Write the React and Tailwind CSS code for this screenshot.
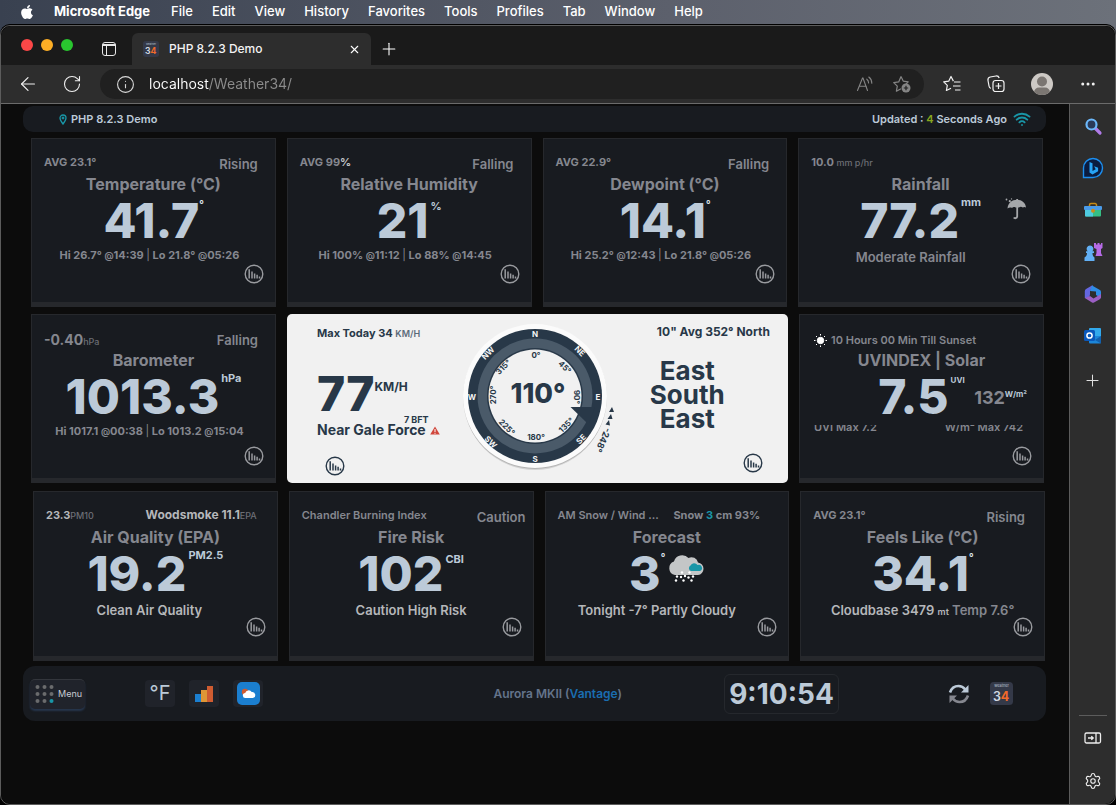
import { ArrowLeft, RotateCw, Info, X, Plus, Ellipsis, Wifi, Settings } from 'lucide-react';
import { FaApple } from 'react-icons/fa';

const menuItems = ['File', 'Edit', 'View', 'History', 'Favorites', 'Tools', 'Profiles', 'Tab', 'Window', 'Help'];

const Logo34 = ({ size }) => (
    <svg width={size} height={size} viewBox="0 0 24 24" className="shrink-0" fontFamily="Inter, sans-serif">
        <rect width="24" height="24" rx="4" fill="#343948" />
        <text x="12" y="5.5" fontSize="4" fill="#b8c2d0" textAnchor="middle">weather</text>
        <text x="3" y="20" fontSize="13" fontWeight="600" fill="#d5dbe4">3<tspan fill="#f26a2a" fontWeight="700">4</tspan></text>
    </svg>
);

const ChartButton = ({ className = 'text-[#999b9f]', label }) => (
    <button aria-label={`${label} chart`} className={`block w-5 h-5 ${className}`}>
        <svg width="20" height="20" viewBox="0 0 20 20" fill="none" stroke="currentColor">
            <circle cx="10" cy="10" r="8.8" strokeWidth="1.4" />
            <path d="M5.2 14.6V5.2M8 14.6V7.4M10.6 14.6V9.6M13.1 14.6V10.8M15.5 14.6V12.4" strokeWidth="1.5" />
        </svg>
    </button>
);

/* Browser chrome */

const MenuBar = () => (
    <nav className="flex items-center h-6 pl-[19px] gap-[19px] text-[13px] font-medium text-white whitespace-nowrap">
        <FaApple size={16} className="text-white" />
        <span className="pr-0.5 font-bold">Microsoft Edge</span>
        {menuItems.map((item) => (
            <span key={item}>{item}</span>
        ))}
    </nav>
);

const TabStrip = () => (
    <div className="flex items-end h-[39px] bg-[#1a1a1a] rounded-t-[10px]">
        <div className="flex items-center gap-2 h-10 pl-5">
            <span className="w-3 h-3 rounded-full bg-[#fc4747]" />
            <span className="w-3 h-3 rounded-full bg-[#fdae25]" />
            <span className="w-3 h-3 rounded-full bg-[#29c62f]" />
        </div>
        <button aria-label="Tab actions" className="flex items-center h-8 ml-7">
            <svg width="16" height="16" viewBox="0 0 16 16" fill="none" stroke="#e8e8e8">
                <rect x="1.5" y="1.5" width="13" height="13" rx="2.5" />
                <path d="M1.5 3.5h13M1.5 4.5h13M5.5 5v9.500" />
            </svg>
        </button>
        <div className="flex items-center w-[239px] h-8 ml-[15px] pl-[11px] pr-2.5 bg-[#2d2d2d] rounded-t-md">
            <Logo34 size={16} />
            <span className="flex-1 ml-2.5 text-xs font-medium text-[#f3f3f3]">PHP 8.2.3 Demo</span>
            <button aria-label="Close tab"><X size={13} strokeWidth={2} className="text-white" /></button>
        </div>
        <button aria-label="New tab" className="flex items-center h-8 ml-2 text-white"><Plus size={20} strokeWidth={1.3} /></button>
    </div>
);

const Toolbar = () => (
    <div className="flex items-center h-[38px] bg-[#2d2d2d] text-[#f0f0f0]">
        <button aria-label="Back" className="ml-4"><ArrowLeft size={22} strokeWidth={1.3} /></button>
        <button aria-label="Reload" className="ml-[23px]"><RotateCw size={20} strokeWidth={1.3} /></button>
        <div className="flex flex-1 items-center h-[30px] ml-[18px] pl-4 pr-3 bg-[#202020] rounded-full">
            <Info size={19} strokeWidth={1.4} className="text-[#d8d8d8]" />
            <input
                aria-label="Address"
                defaultValue="localhost/Weather34/"
                className="flex-1 min-w-0 ml-3.5 text-sm outline-none bg-[linear-gradient(90deg,#ffffff_60px,#8c8c8c_60px)] bg-clip-text text-transparent"
            />
            <button aria-label="Read aloud">
                <svg width="18" height="16" viewBox="0 0 18 16" fill="none" stroke="#858585" strokeWidth="1.1" strokeLinecap="round">
                    <path d="M1.500 14.500 6.500 2h.5l4.500 12.500M3.300 10.200h7M10.800 3.200c1.200.9 1.800 2.200 1.800 3.800M12.800 1c2 1.500 3 3.500 3 6.200" />
                </svg>
            </button>
            <button aria-label="Add to favorites" className="ml-[18px]">
                <svg width="20" height="20" viewBox="0 0 20 20" fill="none" stroke="#858585" strokeWidth="1.200" strokeLinejoin="round">
                    <path d="m9 2.500 2.200 4.600 5 .7-3 3M9 14.800l-4.600 2.400.9-5.100-3.600-3.500 5-.7L9 2.500" />
                    <circle cx="14" cy="14" r="4.500" fill="#858585" stroke="none" />
                    <path d="M14 11.800v4.400M11.800 14h4.400" stroke="#202020" />
                </svg>
            </button>
        </div>
        <button aria-label="Favorites" className="ml-[18px]">
            <svg width="20" height="20" viewBox="0 0 20 20" fill="none" stroke="#f2f2f2" strokeWidth="1.200" strokeLinejoin="round">
                <path d="M11.400 7.100 9 2.500 6.700 7.200l-5 .7 3.600 3.500-.9 5.100L9 14.200M12 8h6.500M11 12h7.500M13 16h5.500" />
            </svg>
        </button>
        <button aria-label="Collections" className="ml-6">
            <svg width="20" height="20" viewBox="0 0 20 20" fill="none" stroke="#f2f2f2" strokeWidth="1.200">
                <rect x="7" y="6.500" width="11" height="11" rx="2.500" />
                <path d="M12.500 9v6M9.500 12h6M4.800 14.400A3 3 0 0 1 3 12L2 6.500A3 3 0 0 1 4.200 3L10 2a3 3 0 0 1 3.200 2" />
            </svg>
        </button>
        <button aria-label="Profile" className="ml-[25px] rounded-full overflow-hidden">
            <svg width="22" height="22" viewBox="0 0 22 22">
                <rect width="22" height="22" fill="#cdc9c5" />
                <circle cx="11" cy="8.500" r="5" fill="#7b7672" />
                <path d="M3 22v-2.500a5 5 0 0 1 5-5h6a5 5 0 0 1 5 5V22z" fill="#7b7672" />
            </svg>
        </button>
        <button aria-label="More" className="ml-[26px] mr-[18px]"><Ellipsis size={18} strokeWidth={2} /></button>
    </div>
);

const sideApps = [
    {
        name: 'Search',
        art: (
            <>
                <path d="m11 11 5 5" stroke="#b07be8" strokeWidth="3.200" strokeLinecap="round" />
                <circle cx="7.500" cy="7.500" r="5" fill="#2a3a58" stroke="#6cb8fa" strokeWidth="2.200" />
            </>
        ),
    },
    {
        name: 'Bing',
        art: (
            <>
                <path d="M-.5 18.500V9a9.500 9.500 0 1 1 9.500 9.500z" fill="#0a1c40" stroke="#1c8ff0" strokeWidth="1.400" />
                <path d="m5.500 3 3 1.200v7.800l3.200-1.700-1.600-3.100 4 1.600v3.400L8.500 15.500l-3-2z" fill="#27a4f6" />
            </>
        ),
    },
    {
        name: 'Tools',
        art: (
            <>
                <path d="M5.500 5V4a1.500 1.500 0 0 1 1.500-1.500h4A1.500 1.500 0 0 1 12.500 4v1" fill="none" stroke="#c78a14" strokeWidth="1.500" />
                <rect x="1" y="7" width="16" height="8.500" rx="1" fill="#35bf85" />
                <path d="M1 8h8v7.500H2a1 1 0 0 1-1-1z" fill="#4fcbe0" />
                <rect x="0" y="5" width="18" height="4" rx="1" fill="#4a9be8" />
                <circle cx="9" cy="9.800" r="2" fill="#c98e1c" />
            </>
        ),
    },
    {
        name: 'Games',
        art: (
            <>
                <path d="M10 0h2v1.500h1.500V0h2v1.500H17V0h1.500v5l-1.500 1v4l1.500 3h-7l1-3V6L10 5z" fill="#b66be6" />
                <path d="M6 2.500a3.300 3.300 0 0 1 2.300 5.700H10V10H8.500c0 2 .5 3.500 2 4.500v3.500h-10v-3.500c1.800-1 2.500-2.500 2.500-4.500H2V8.200h1.700A3.300 3.300 0 0 1 6 2.500z" fill="#62b0f5" />
            </>
        ),
    },
    {
        name: 'Microsoft 365',
        art: (
            <>
                <path d="M8 .5 2 4a2.500 2.500 0 0 0-1.200 2.200V13c3 0 5.200-1 5.200-4V6l3-5.500z" fill="#6467e0" />
                <path d="m8 .5 7.500 4.300A2.500 2.500 0 0 1 17 7v6l-5-3V6.500L6 6z" fill="#2f8de6" />
                <path d="M.8 13 8 17.500a2 2 0 0 0 2 0l5.800-3.300A2.500 2.500 0 0 0 17 12V9l-7.500 4.500L6 11z" fill="#9b5fc4" />
            </>
        ),
    },
    {
        name: 'Outlook',
        art: (
            <>
                <rect x="5" y="1" width="12" height="10" rx="1" fill="#32a9ec" />
                <path d="M5 9h12v6.500a1 1 0 0 1-1 1H6a1 1 0 0 1-1-1z" fill="#1c86d9" />
                <path d="m17 9-6 4 6 3.500z" fill="#1260ad" />
                <rect x="0" y="3" width="11" height="11" rx="1.500" fill="#0a58bb" />
                <circle cx="5.500" cy="8.500" r="2.600" fill="none" stroke="#fff" strokeWidth="1.500" />
            </>
        ),
    },
];

const EdgeSidebar = () => (
    <aside className="flex flex-col items-center w-[46px] pt-px bg-[#2d2d2d] border-l border-[#5c5c5c] rounded-br-[10px]">
        {sideApps.map((app) => (
            <button key={app.name} aria-label={app.name} className="flex items-center justify-center w-full h-[42px]">
                <svg width="18" height="18" viewBox="0 0 18 18" overflow="visible">{app.art}</svg>
            </button>
        ))}
        <button aria-label="Add app" className="mt-3.5 text-[#e0e0e0]"><Plus size={19} strokeWidth={1.300} /></button>
        <div className="w-7 mt-auto border-t border-[#5c5c5c]" />
        <button aria-label="Hide sidebar" className="flex items-center justify-center w-full h-11">
            <svg width="18" height="14" viewBox="0 0 18 14" fill="none" stroke="#ededed" strokeWidth="1.300">
                <rect x="1" y="2" width="15.500" height="10" rx="1.500" />
                <path d="M12 2v10M4 7h5M7.300 5.200 9.200 7 7.300 8.800" />
            </svg>
        </button>
        <button aria-label="Settings" className="flex items-center justify-center w-full h-[42px] mb-0.5 text-[#ededed]">
            <Settings size={18} strokeWidth={1.500} />
        </button>
    </aside>
);

/* Weather modules */

const Card = ({ title, left, right, rightPad = 'pr-[17px]', value, unit, extra, sub, subClass = 'pr-2', iconClass = '' }) => (
    <section className="flex flex-col pt-[13px] bg-[#181b20] border border-b-[5px] border-[#26282c] text-[#85878f] font-bold whitespace-nowrap">
        <div className={`flex justify-between h-[22px] pl-3 leading-5 ${rightPad}`}>
            {left}
            {right}
        </div>
        <h2 className="text-base leading-5 text-center">{title}</h2>
        <div className="grid grid-cols-[1fr_auto_1fr] h-[54px]">
            <div className="col-start-2 flex items-start">
                <span className="text-5xl leading-[54px] font-extrabold text-[#bccad8]">{value}</span>
                {unit}
            </div>
            {extra}
        </div>
        <div className={`flex justify-center h-4 ${subClass}`}>{sub}</div>
        <div className={`flex justify-end pr-[11px] ${iconClass}`}>
            <ChartButton label={title} />
        </div>
    </section>
);

const Trend = ({ children }) => <span className="self-end text-[13px] font-semibold">{children}</span>;

const Avg = ({ children }) => <span className="text-[11px]">AVG {children}</span>;

const Degree = () => <span className="w-1 text-[10px] leading-5 text-[#dfe6ee]">°</span>;

const Unit = ({ children, low }) => (
    <span className={`ml-0.5 text-[11px] leading-3 text-[#bccad8] ${low ? 'mt-1.5' : 'mt-0.5'}`}>{children}</span>
);

const Small = ({ children }) => <span className="text-[9px] font-medium text-[#6c6e75]">{children}</span>;

const HiLo = ({ hi, hiAt, lo, loAt }) => (
    <span className="text-[11px] leading-[14px]">
        Hi {hi} <span className="text-[9px]">@</span>{hiAt} <span className="font-normal">|</span> Lo {lo} <span className="text-[9px]">@</span>{loAt}
    </span>
);

const outerLabels = [
    ['N', 0, -62, 0], ['NE', 45, -45, 45], ['E', 63, 1, 0], ['SE', 46, 43, -45],
    ['S', 0, 63, 0], ['SW', -44, 46, 45], ['W', -63, 1, 0], ['NW', -47, -43, -45],
];

const innerLabels = [
    ['0°', 1, -41, 0], ['45°', 30, -29, 45], ['90°', 42, 1, 90], ['135°', 31, 29, -45],
    ['180°', 1, 41, 0], ['225°', -28, 31, 45], ['270°', -42, -1, -90], ['315°', -32, -29, -45],
];

const Compass = () => (
    <svg width="170" height="167" viewBox="0 0 170 167" className="overflow-visible" fontFamily="Inter, sans-serif" fontWeight="700" textAnchor="middle">
        <g transform="translate(82 82)">
            <circle r="71" cy="3" fill="#000" opacity="0.12" />
            <circle r="72" cy="1" fill="#000" opacity="0.15" />
            <circle r="72" fill="#fbfbfb" />
            <circle r="67" fill="#283848" />
            <circle r="57.5" fill="#4a5a69" />
            <circle r="48" fill="#283848" />
            <circle r="46.500" fill="#f1f1f1" />
            <path d="M35.500 11H60L54 27h-2z" fill="#283848" />
            {outerLabels.map(([text, x, y, turn]) => (
                <text key={text} transform={`translate(${x} ${y}) rotate(${turn})`} y="3" fontSize="8" fill="#f4f4f4">{text}</text>
            ))}
            {innerLabels.map(([text, x, y, turn]) => (
                <text key={text} transform={`translate(${x} ${y}) rotate(${turn})`} y="3" fontSize="8" fill="#283848">{text}</text>
            ))}
            <text x="3" y="7" fontSize="27" fontWeight="800" fill="#283848">110°</text>
            <path d="m77 11 2 5h-5zM76 18l1.500 5h-5zM74 24l1 5.500-4.500-1z" fill="#283848" />
            <text transform="translate(68 44) rotate(113)" y="3" fontSize="9" fill="#283848">-248°</text>
        </g>
    </svg>
);

const WindCard = () => (
    <section className="col-span-2 grid grid-cols-[1fr_170px_1fr] bg-[#f1f1f1] rounded-[5px] text-[#283848] font-bold whitespace-nowrap">
        <div className="flex flex-col items-start pl-[30px]">
            <p className="mt-2.5 text-[11px] leading-[18px]">Max Today 34 <span className="text-[9px] font-semibold text-[#5b6a79]">KM/H</span></p>
            <p className="flex items-start mt-[30px] text-5xl leading-[42px] font-extrabold">77<span className="mt-1.5 text-xs leading-4 font-bold">KM/H</span></p>
            <p className="self-end pr-6 text-[9px] leading-[9px]">7 BFT</p>
            <p className="flex items-center gap-1 text-sm leading-3">
                Near Gale Force
                <svg width="10" height="9" viewBox="0 0 10 9">
                    <path d="M5 .5 9.800 8.500H.2z" fill="#d0463b" />
                    <path d="M5 3v3M5 6.800v1" stroke="#fff" />
                </svg>
            </p>
            <div className="mt-5 pl-2"><ChartButton label="Wind speed" className="text-[#283848]" /></div>
        </div>
        <Compass />
        <div className="flex flex-col">
            <p className="mt-2.5 pr-[18px] text-right text-xs leading-4">10" Avg 352° North</p>
            <p className="mt-[19px] pr-9 text-[26px] leading-6 text-center">East<br />South<br />East</p>
            <div className="flex justify-end mt-[22px] pr-[25px]"><ChartButton label="Wind direction" className="text-[#283848]" /></div>
        </div>
    </section>
);

const RainUmbrella = () => (
    <svg width="22" height="22" viewBox="0 0 22 22" fill="#a5a7aa" className="justify-self-end mt-1 mr-[15px]">
        <path d="M2.500 10.500C3 5 7 1.800 12 1.800S20.500 5 21 9.500c-1-.8-2.200-.8-3.200 0-1.200-1-2.700-1-3.800 0h-3.500c-1.200-.8-2.500-.6-3.500.4-1.400-.8-3-.6-4.500.6z" />
        <path d="M12.200 1v17.500a2 2 0 0 1-3.500 1" fill="none" stroke="#a5a7aa" strokeWidth="1.800" />
        <circle cx="1.500" cy="1.500" r=".9" /><circle cx="4.800" cy="3.200" r="1.100" /><circle cx="6.500" cy=".9" r=".7" />
    </svg>
);

const SnowCloud = () => (
    <svg width="38" height="32" viewBox="0 0 38 32" className="mt-1.5 ml-0.5">
        <path d="M8 22a7 7 0 0 1-1-13.500A8.500 8.500 0 0 1 21.500 5a6.500 6.500 0 0 1 9.500 4.500A6.300 6.300 0 0 1 31 22z" fill="#c4c6c7" />
        <path d="M24 18a3 3 0 0 1-.5-5.500 4 4 0 0 1 7-.5 3.200 3.200 0 0 1 2.500 6z" fill="#1996a7" />
        <g fill="#fff">
            <circle cx="15" cy="19.500" r="1.200" /><circle cx="22.500" cy="19.500" r="1.200" />
            <circle cx="10" cy="23.500" r="1.200" /><circle cx="14" cy="24" r="1.200" /><circle cx="18" cy="23" r="1.200" />
            <circle cx="21.500" cy="24.500" r="1.200" /><circle cx="26" cy="23.500" r="1.200" />
            <circle cx="9" cy="27.500" r="1.200" /><circle cx="16.500" cy="27.500" r="1.200" /><circle cx="24.500" cy="27.500" r="1.200" />
        </g>
    </svg>
);

const Sun = () => (
    <svg width="13" height="13" viewBox="0 0 13 13" fill="#fff" stroke="#fff">
        <circle cx="6.500" cy="6.500" r="3.200" />
        <path d="M6.500 0v1.500M6.500 11.500V13M0 6.500h1.500M11.500 6.500H13M2 2l1 1M10 10l1 1M11 2l-1 1M3 10l-1 1" />
    </svg>
);

const StationHeader = () => (
    <header className="flex items-center justify-between h-[26px] mt-0.5 ml-[22px] mr-[23px] pl-9 pr-[15px] bg-[#181b20] rounded-[10px] text-[11px] font-semibold text-[#bccad8]">
        <h1 className="flex items-center gap-1">
            <svg width="8" height="11" viewBox="0 0 8 11" fill="none" stroke="#1996a7">
                <path d="M4 10C2 7.500 1 6 1 4a3 3 0 0 1 6 0c0 2-1 3.500-3 6z" strokeWidth="1.300" />
                <circle cx="4" cy="4" r="1" fill="#1996a7" />
            </svg>
            PHP 8.2.3 Demo
        </h1>
        <p className="flex items-center gap-1.5">
            <span>Updated : <span className="text-[#86a51f]">4</span> Seconds Ago</span>
            <Wifi size={18} strokeWidth={2.500} className="text-[#1996a7]" />
        </p>
    </header>
);

const StationFooter = () => (
    <footer className="flex items-center h-[55px] mt-[5px] ml-[22px] mr-[23px] pl-[7px] pr-[33px] bg-[#181b20] rounded-xl">
        <button className="flex items-center gap-1 w-[55px] h-[30px] pl-[5px] bg-[#20232b] border-t border-[#33363c] rounded-[5px] text-[9px] text-[#c9cdd3] shadow-[0_2px_2px_#26364d]">
            <svg width="19" height="20" viewBox="0 0 19 20">
                {[3, 10, 17].map((y) => [2.500, 9.500, 16.500].map((x) => (
                    <circle key={`${x}-${y}`} cx={x} cy={y} r="2" fill={x > 16 && y > 16 ? '#1996a7' : '#6a6b6d'} />
                )))}
            </svg>
            Menu
        </button>
        <button className="w-[30px] h-[27px] ml-[60px] bg-[#20232a] rounded-sm text-xl leading-[27px] text-[#bccad8]">°F</button>
        <button aria-label="Charts" className="flex items-center justify-center w-[30px] h-[27px] ml-3.5 bg-[#20232a] rounded-sm">
            <svg width="18" height="16" viewBox="0 0 18 16">
                <path d="M0 8h6v8H0z" fill="#1b7fd0" />
                <path d="M6 4h6v12H6z" fill="#de9636" />
                <path d="M12 0h6v16h-6z" fill="#cf5c31" />
            </svg>
        </button>
        <button aria-label="Weather" className="flex items-center justify-center w-[30px] h-[27px] ml-3.5 bg-[#20232a] rounded-sm">
            <svg width="23" height="23" viewBox="0 0 23 23">
                <rect width="23" height="23" rx="5" fill="#1b7fd0" />
                <circle cx="8" cy="10" r="3.200" fill="#cf5c31" />
                <path d="M8.500 16a2.500 2.500 0 0 1-.3-5A3.600 3.600 0 0 1 14.700 10a3 3 0 0 1 1 6z" fill="#fff" />
            </svg>
        </button>
        <p className="ml-auto text-xs font-semibold text-[#64748b]">Aurora MKII (<a href="#vantage" className="text-[#1a6db0]">Vantage</a>)</p>
        <time className="flex items-center justify-center w-[115px] h-10 ml-[102px] border border-[#25282d] rounded-md text-[28px] font-bold text-[#bccad8]">9:10:54</time>
        <button aria-label="Refresh" className="ml-[109px]">
            <svg width="22" height="20" viewBox="0 0 22 20" fill="none" strokeWidth="2.600">
                <path d="M2 8.500C3.500 4 7 2 10.500 2c3 0 5 1.200 6.800 3.500" stroke="#bccad8" />
                <path d="M20.500 1v7.500H13z" fill="#bccad8" />
                <path d="M20 11.500c-1.500 4.500-5 6.500-8.500 6.500-3 0-5-1.200-6.800-3.500" stroke="#85878f" />
                <path d="M1.500 19v-7.500H9z" fill="#85878f" />
            </svg>
        </button>
        <button aria-label="About Weather34" className="ml-5"><Logo34 size={23} /></button>
    </footer>
);

const Dashboard = () => (
    <main className="flex-1 min-w-0 bg-[#0c0c0c] rounded-bl-[10px]">
        <StationHeader />

        <div className="grid grid-cols-4 gap-[11px] h-[169px] mt-1.5 pl-[30px] pr-[26px]">
            <Card
                title="Temperature (°C)"
                left={<Avg>23.1°</Avg>}
                right={<Trend>Rising</Trend>}
                value="41.7"
                unit={<Degree />}
                sub={<HiLo hi="26.7°" hiAt="14:39" lo="21.8°" loAt="05:26" />}
            />
            <Card
                title="Relative Humidity"
                left={<Avg>99<span className="text-[#c4c6c9]">%</span></Avg>}
                right={<Trend>Falling</Trend>}
                value="21"
                unit={<Unit low>%</Unit>}
                sub={<HiLo hi="100%" hiAt="11:12" lo="88%" loAt="14:45" />}
            />
            <Card
                title="Dewpoint (°C)"
                left={<Avg>22.9°</Avg>}
                right={<Trend>Falling</Trend>}
                value="14.1"
                unit={<Degree />}
                sub={<HiLo hi="25.2°" hiAt="12:43" lo="21.8°" loAt="05:26" />}
            />
            <Card
                title="Rainfall"
                left={<span className="text-[11px]">10.0 <Small>mm p/hr</Small></span>}
                value="77.2"
                unit={<Unit>mm</Unit>}
                extra={<RainUmbrella />}
                sub="Moderate Rainfall"
                subClass="pt-px pr-5 text-[13px] leading-4 font-semibold"
            />
        </div>

        <div className="grid grid-cols-4 gap-[11px] h-[169px] mt-[7px] pl-[30px] pr-[25px]">
            <Card
                title="Barometer"
                left={<span className="self-end text-sm leading-4">-0.40<Small>hPa</Small></span>}
                right={<Trend>Falling</Trend>}
                value="1013.3"
                unit={<Unit>hPa</Unit>}
                sub={<HiLo hi="1017.1" hiAt="00:38" lo="1013.2" loAt="15:04" />}
                iconClass="pt-1.5"
            />
            <WindCard />
            <Card
                title="UVINDEX | Solar"
                left={<span className="self-end flex items-center gap-1 pl-0.5 text-[11px] font-semibold"><Sun />10 Hours 00 Min Till Sunset</span>}
                value="7.5"
                unit={<span className="ml-0.5 mt-1 text-[8px] leading-3 text-[#bccad8]">UVI</span>}
                extra={<span className="justify-self-end flex items-start mt-4 pr-4 text-lg leading-6">132<span className="text-[8px] leading-4 text-[#bccad8]">W/m²</span></span>}
                sub={(
                    <div className="flex justify-between items-end w-full h-2 mt-px pl-3.5 pr-5 text-[11px] leading-none font-semibold overflow-hidden">
                        <span>UVI Max 7.2</span>
                        <span>W/m² Max 742</span>
                    </div>
                )}
                subClass=""
                iconClass="pt-1.5"
            />
        </div>

        <div className="grid grid-cols-4 gap-[11px] h-[170px] mt-2 pl-8 pr-6">
            <Card
                title="Air Quality (EPA)"
                left={<span className="text-[11px] text-[#b5b7ba]">23.3<Small>PM10</Small></span>}
                right={<span className="text-xs leading-5 text-[#b5b7ba]">Woodsmoke 11.1<Small>EPA</Small></span>}
                rightPad="pr-5"
                value="19.2"
                unit={<Unit>PM2.5</Unit>}
                sub="Clean Air Quality"
                subClass="pt-px pr-3 text-[13px] leading-4 font-semibold text-[#b5b7ba]"
            />
            <Card
                title="Fire Risk"
                left={<span className="text-[11px] font-semibold">Chandler Burning Index</span>}
                right={<Trend>Caution</Trend>}
                rightPad="pr-[7px]"
                value="102"
                unit={<Unit low>CBI</Unit>}
                sub="Caution High Risk"
                subClass="pt-px text-[13px] leading-4 font-semibold text-[#b5b7ba]"
            />
            <Card
                title="Forecast"
                left={<span className="text-[11px] font-semibold">AM Snow / Wind ...</span>}
                right={<span className="text-[11px]">Snow <span className="text-[#1996a7]">3</span> cm 93%</span>}
                rightPad="pr-7"
                value="3"
                unit={<><Degree /><SnowCloud /></>}
                sub="Tonight -7° Partly Cloudy"
                subClass="pt-px pr-5 text-[13px] leading-4 font-semibold text-[#b5b7ba]"
            />
            <Card
                title="Feels Like (°C)"
                left={<Avg>23.1°</Avg>}
                right={<Trend>Rising</Trend>}
                rightPad="pr-[19px]"
                value="34.1"
                unit={<Degree />}
                sub={<span>Cloudbase 3479 <span className="text-[9px]">mt</span> <span className="text-[#85878f]">Temp 7.6°</span></span>}
                subClass="pt-px text-[13px] leading-4 font-semibold text-[#b5b7ba]"
            />
        </div>

        <StationFooter />
    </main>
);

export default function App() {
    return (
        <div className="flex flex-col min-h-screen bg-[linear-gradient(90deg,#394150,#5c606c_60%,#6c717a)] font-['Inter',sans-serif]">
            <MenuBar />
            <div className="flex flex-col flex-1 bg-black border-t border-black rounded-t-[10px]">
                <div className="flex flex-col flex-1 border border-[#5c5c5c] rounded-[10px]">
                    <TabStrip />
                    <Toolbar />
                    <div className="flex flex-1 border-t border-[#6b6b6b]">
                        <Dashboard />
                        <EdgeSidebar />
                    </div>
                </div>
            </div>
        </div>
    );
}
